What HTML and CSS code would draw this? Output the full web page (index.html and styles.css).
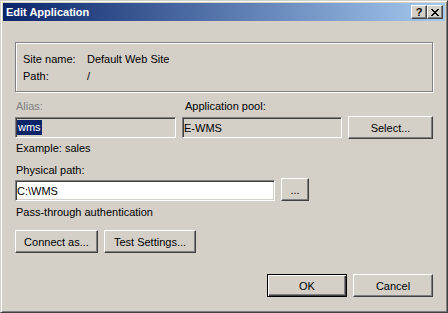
FILE: index.html
```html
<!DOCTYPE html>
<html lang="en">
<head>
    <meta charset="UTF-8">
    <title>Edit Application</title>
    <link rel="stylesheet" href="styles.css">
</head>
<body>
    <div class="window">
        <div class="titlebar">
            <span class="title">Edit Application</span>
            <div class="caption-buttons">
                <span class="cap-btn">?</span>
                <span class="cap-btn">
                    <svg width="8" height="7" viewBox="0 0 8 7">
                        <path fill="#000" d="M0 0h2v1H0zM6 0h2v1H6zM1 1h2v1H1zM5 1h2v1H5zM2 2h4v1H2zM3 3h2v1H3zM2 4h4v1H2zM1 5h2v1H1zM5 5h2v1H5zM0 6h2v1H0zM6 6h2v1H6z"/>
                    </svg>
                </span>
            </div>
        </div>

        <div class="content">
            <div class="groupbox">
                <div class="info-row"><span class="info-label">Site name:</span><span>Default Web Site</span></div>
                <div class="info-row"><span class="info-label">Path:</span><span>/</span></div>
            </div>

            <div class="pool-grid">
                <span class="label disabled">Alias:</span>
                <span class="label pool-label">Application pool:</span>
                <span></span>
                <div class="field"><span class="selected">wms</span></div>
                <div class="field">E-WMS</div>
                <button class="btn">Select...</button>
            </div>

            <div class="hint">Example: sales</div>

            <div class="label physical-label">Physical path:</div>
            <div class="path-row">
                <div class="field editable path-field">C:\WMS</div>
                <button class="btn browse-btn">...</button>
            </div>

            <div class="hint pass">Pass-through authentication</div>

            <div class="connect-row">
                <button class="btn connect-btn">Connect as...</button>
                <button class="btn test-btn">Test Settings...</button>
            </div>

            <div class="dialog-actions">
                <button class="btn btn-default action-btn">OK</button>
                <button class="btn action-btn">Cancel</button>
            </div>
        </div>
    </div>
</body>
</html>
```

FILE: styles.css
```css
body {
    margin: 0;
    font-family: "Liberation Sans", Arial, sans-serif;
    font-size: 11px;
    color: #000;
}
.window {
    width: 448px;
    height: 313px;
    box-sizing: border-box;
    padding: 2px;
    background: #d4d0c8;
    border: 1px solid;
    border-color: #d4d0c8 #404040 #404040 #d4d0c8;
    box-shadow: inset 1px 1px #fff, inset -1px -1px #808080;
}
.titlebar {
    height: 18px;
    display: flex;
    align-items: center;
    justify-content: space-between;
    padding: 0 2px 0 3px;
    background: linear-gradient(to right, #0a246a, #a6caf0);
    color: #fff;
}
.title {
    font-weight: bold;
}
.caption-buttons {
    display: flex;
}
.cap-btn {
    width: 16px;
    height: 14px;
    box-sizing: border-box;
    display: flex;
    align-items: center;
    justify-content: center;
    background: #d4d0c8;
    color: #000;
    font-weight: bold;
    border: 1px solid;
    border-color: #fff #404040 #404040 #fff;
    box-shadow: inset -1px -1px #808080;
}
.content {
    padding: 21px 12px 0;
}
.groupbox {
    border: 1px solid #808080;
    box-shadow: inset 1px 1px #fff, 1px 1px #fff;
    padding: 8px 7px 6px;
}
.info-row {
    display: flex;
    line-height: 17px;
}
.info-label {
    width: 64px;
}
.pool-grid {
    display: grid;
    grid-template-columns: 161px 160px 85px;
    column-gap: 6px;
    row-gap: 3px;
    align-items: start;
    margin-top: 7px;
}
.label {
    line-height: 14px;
    padding-left: 1px;
}
.pool-label {
    padding-left: 3px;
}
.disabled {
    color: #808080;
}
.field {
    box-sizing: border-box;
    height: 21px;
    margin-top: 1px;
    display: flex;
    align-items: center;
    padding: 0 1px;
    background: #d4d0c8;
    border: 1px solid;
    border-color: #808080 #fff #fff #808080;
    box-shadow: inset 1px 1px #404040, inset -1px -1px #d4d0c8;
}
.field.editable {
    background: #fff;
}
.selected {
    background: #0a246a;
    color: #fff;
    line-height: 15px;
    padding: 0 1px;
}
.btn {
    box-sizing: border-box;
    height: 23px;
    padding: 0;
    font: inherit;
    color: #000;
    background: #d4d0c8;
    border: 1px solid;
    border-color: #fff #404040 #404040 #fff;
    box-shadow: inset -1px -1px #808080;
}
.btn-default {
    border-color: #000;
    box-shadow: inset 1px 1px #fff, inset -1px -1px #404040, inset -2px -2px #808080;
}
.hint {
    margin-top: 2px;
    line-height: 14px;
    padding-left: 1px;
}
.physical-label {
    margin-top: 8px;
}
.path-row {
    display: flex;
    gap: 6px;
    margin-top: 1px;
    align-items: flex-start;
}
.path-field {
    width: 260px;
    margin-top: 2px;
}
.browse-btn {
    width: 28px;
}
.pass {
    margin-top: 4px;
}
.connect-row {
    display: flex;
    gap: 6px;
    margin-top: 11px;
}
.connect-btn {
    width: 83px;
}
.test-btn {
    width: 92px;
}
.dialog-actions {
    display: flex;
    justify-content: flex-end;
    gap: 6px;
    margin-top: 21px;
}
.action-btn {
    width: 80px;
}
```
